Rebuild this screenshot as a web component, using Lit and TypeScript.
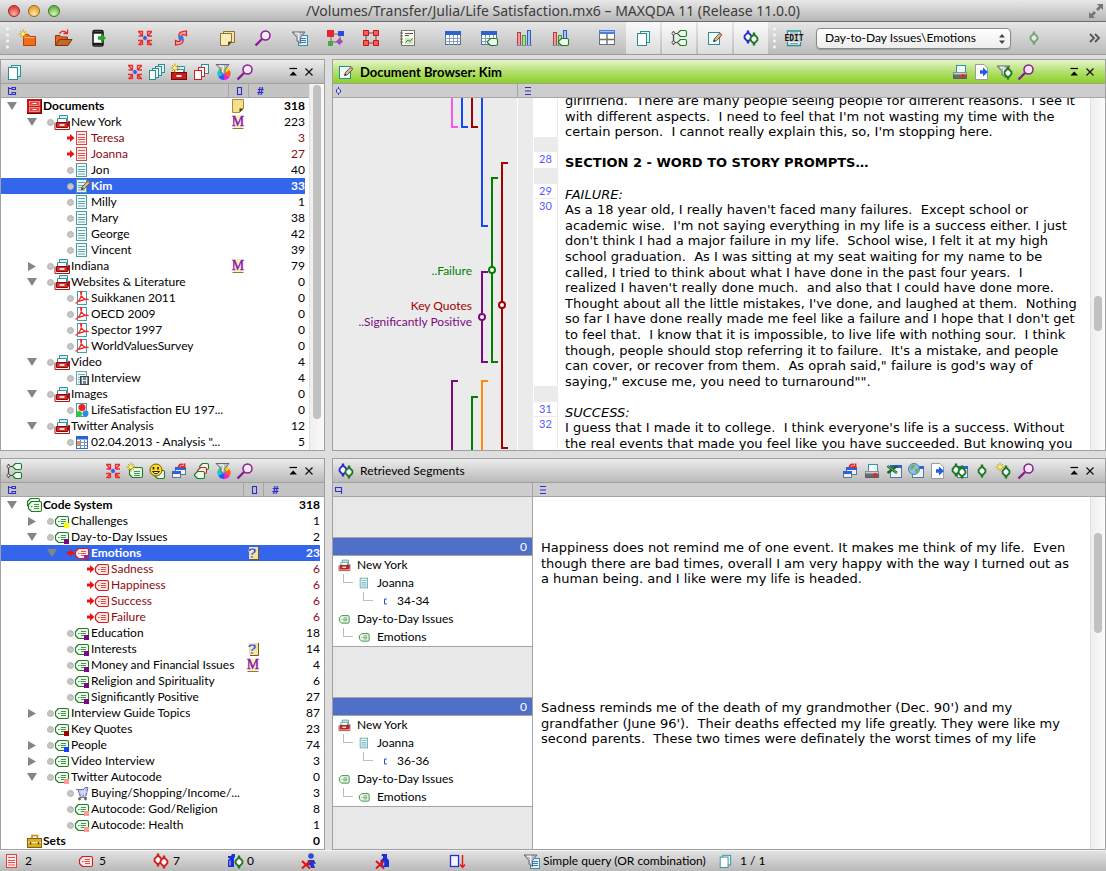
import { LitElement, html, svg, css, nothing } from "lit";
import { customElement, property, state } from "lit/decorators.js";
import { classMap } from "lit/directives/class-map.js";

/* ---------- shared icon parts ---------- */

const spark = (x: number, y: number) => svg`
  <path transform="translate(${x} ${y})" d="M0 -4.5V4.5M-4.5 0H4.5M-3 -3L3 3M3 -3L-3 3" stroke="#d0a000" stroke-width="1"/>
  <circle cx=${x} cy=${y} r="1.8" fill="#fff27a"/>`;

const diamond = (x: number, y: number, c: string) => svg`
  <path d="M${x} ${y - 6.5}V${y + 6.5}" stroke=${c} stroke-width="2.4"/>
  <path d="M${x - 1.2} ${y - 3.6}H${x + 1.2}L${x + 3.4} ${y - 1.2}V${y + 1.2}L${x + 1.2} ${y + 3.6}H${x - 1.2}L${x - 3.4} ${y + 1.2}V${y - 1.2}Z" fill="#fff" stroke=${c} stroke-width="1.9"/>`;

const sheet = (x: number, y: number, w: number, h: number, c: string, f = "#fff") => svg`
  <rect x=${x + 0.5} y=${y + 0.5} width=${w - 1} height=${h - 1} fill=${f} stroke=${c}/>`;

const tag = (x: number, y: number, w: number, h: number, c: string, f = "#eefaee") => svg`
  <path transform="translate(${x} ${y})" d="M3.5 .5H${w - 2}Q${w - 0.5} .5 ${w - 0.5} 2V${h - 2}Q${w - 0.5} ${h - 0.5} ${w - 2} ${h - 0.5}H3.5L.5 ${h - 3.5}V3.5Z"
    fill=${f} stroke=${c} stroke-width="1.1" stroke-linejoin="round"/>`;

const codeTag = (c: string, fill: string, lines: string) => svg`
  ${tag(0, 3, 14, 11, c, fill)}
  <path d="M3 8.500H4.500M6 6.500H11M5.500 8.500H11M6 10.500H11" stroke=${lines} stroke-width=".9"/>`;

const funnel = svg`
  <path d="M1 2H14L9.5 7.5V13.5L6 11V7.5Z" fill="#b9bec6" stroke="#656b75"/>
  <path d="M4 3.2H8L7.4 10" stroke="#fff" fill="none"/>`;

const colorWheel = svg`
  <path d="M9 9.5V3A6.500 6.500 0 0 1 14.7 6.2Z" fill="#ffd800"/><path d="M9 9.5L14.7 6.200A6.500 6.500 0 0 1 14.700 12.800Z" fill="#ff5a1e"/>
  <path d="M9 9.500L14.700 12.800A6.500 6.500 0 0 1 9 16Z" fill="#f01fd0"/><path d="M9 9.500V16A6.500 6.500 0 0 1 3.300 12.800Z" fill="#2a55ff"/>
  <path d="M9 9.500L3.300 12.800A6.500 6.500 0 0 1 3.300 6.200Z" fill="#12c7d8"/><path d="M9 9.500L3.300 6.200A6.500 6.500 0 0 1 9 3Z" fill="#3fd52c"/>`;

const funnelTop = svg`
  <path d="M1 .500H14L10 5.500V11L6 9V5.500Z" fill="#b9bec6" stroke="#656b75"/><path d="M4 2H8.500L7.500 8" stroke="#fff" fill="none"/>`;

const windowShape = (x: number, y: number, w: number, h: number) => svg`
  <rect x=${x + 0.5} y=${y + 0.5} width=${w - 1} height=${h - 1} fill="#eef3fb" stroke="#5b7796"/>
  <rect x=${x} y=${y} width=${w} height="3" fill="#2e63d6"/>`;

const pencil = svg`
  <path d="M6.5 11.5L7.4 8.6L12.6 3.2L14.8 5.2L9.4 10.7Z" fill="#d9b98c" stroke="#5a4636" stroke-width=".9"/>
  <path d="M12 3.8L14.2 5.8L15.4 4.4L13.4 2.4Z" fill="#d26a55"/><path d="M6.3 11.8L7 9.8L8.4 11Z" fill="#222"/>`;

const gridLines = (x: number, y: number, w: number, h: number) => svg`
  <rect x=${x + 0.5} y=${y + 0.5} width=${w - 1} height=${h - 1} fill="#fff" stroke="#4f6f9d"/>
  <rect x=${x} y=${y} width=${w} height="4" fill="#2c63cf"/>
  <path d="M${x + 4.5} ${y + 4}v${h - 4}M${x + 8.5} ${y + 4}v${h - 4}M${x + 12.5} ${y + 4}v${h - 4}M${x} ${y + 7.5}h${w}M${x} ${y + 10.5}h${w}" stroke="#7c93b4" stroke-width=".9"/>`;

const bars = svg`
  <rect x=".5" y="2.5" width="3" height="13" fill="#f09a9a" stroke="#b83c44"/>
  <rect x="5.500" y="5.500" width="3" height="10" fill="#a9e28b" stroke="#4b9a3a"/>
  <rect x="10.500" y=".500" width="3" height="15" fill="#a4c3f7" stroke="#2c5ec4"/>
  <path d="M-.500 15.500H15" stroke="#7f93a8"/>`;

const drawer = svg`
  <path d="M4.500 1.500H12.500V7.500H4.500Z" fill="#d8f0f1" stroke="#3a9298"/>
  <path d="M2.500 4.500H11.500V9.500H2.500Z" fill="#fff" stroke="#3a9298"/>
  <path d="M14.500 7V15.500H0V8.500" stroke="#b11414" fill="none"/>
  <path d="M1.500 8.500H12.500V13.500H1.500Z" fill="#d42a2a" stroke="#8b0a0a"/>
  <path d="M12.500 8.500L14 6.500V12L12.500 13.500Z" fill="#9c1010"/>
  <path d="M4.500 11H9.500" stroke="#fff" stroke-width="1.600"/>`;

const lined = (c: string, f: string, x = 3) => svg`
  <rect x=${x - 0.5} y="1.5" width="10" height="13" fill=${f} stroke=${c}/>
  <path d="M${x + 1} 4.500h7M${x + 1} 7.500h7M${x + 1} 9.500h7M${x + 1} 12h7" stroke=${c} stroke-width=".9"/>`;

const redCross = svg`<path d="M1 8L9 15.5M9 8L1 15.5" stroke="#e81111" stroke-width="2"/>`;
const bottle = svg`<path d="M7 1H12V5L14 7.5V14H5.500V7.500L8 5V3H6.500Z" fill="#1c2fd2"/><path d="M8.500 8V12.500" stroke="#aab4ff" stroke-width="1.500"/>`;

const folderBody = svg`<path d="M4.500 6V15.500H16.500V6.500H11L9.500 4.500H5.500Z" fill="#f36c17" stroke="#b2420a"/><path d="M5.500 7.500H15.500" stroke="#ffb27c"/>`;

const arrowRight = (x: number, y: number, c: string) =>
  svg`<path transform="translate(${x} ${y})" d="M0 -1.800H3V-4.500L8 0L3 4.500V1.800H0Z" fill=${c}/>`;

const ICONS: Record<string, unknown> = {
  folderNew: svg`${folderBody}${spark(4, 4)}`,
  folderOpen: svg`<path d="M.500 15.500V5.500H5L6.500 7H12.500V9.500" fill="#e0661c" stroke="#8b3a0a"/><path d="M.500 15.500L4.500 9.500H17L13 15.500Z" fill="#c4672f" stroke="#7d3408"/><path d="M4.500 3.500Q8 -1 11.500 3M8.500 3.500H12.500V-.500" stroke="#e22" fill="none" stroke-width="1.300"/>`,
  phone: svg`<rect x="2" y=".500" width="10" height="15.500" rx="1.500" fill="#fff" stroke="#1c1c1c" stroke-width="1.600"/><path d="M2 2.500H12M2 14H12" stroke="#1c1c1c" stroke-width="2.400"/>${arrowRight(7, 8, "#1fa821")}`,
  reset: svg`<path d="M1 1.500H5.500V6H1.500M1.500 1.500L5.500 6M10.500 6V1.500H15M10.500 6H15M15 1.500L10.500 6M1 10.500H5.500V15M1.500 15L5.500 10.500M1.500 14.500H5M10.500 15V10.500H15M15 15L10.500 10.500M11 14.500H14.500" stroke="#ee2b2b" stroke-width="1.300" fill="none"/><path d="M8 5V11M5 8H11" stroke="#8fb0ff"/><circle cx="8" cy="8" r="1.900" fill="#2b5cf0"/>`,
  swirl: svg`<path d="M6 7Q5 2.500 9.500 1.500L13.500 1V5.500L11 4.500Q8.500 4.500 8.500 6.500M10 9Q11 13.500 6.500 14.500L2.500 15V10.500L5 11.500Q7.500 11.500 7.500 9.500" fill="#f7a0a0" stroke="#e02020" stroke-width="1.200"/><circle cx="8" cy="8" r="2.600" fill="#2b7cf0"/>`,
  memos: svg`<path d="M4.500 1.500H15.500V12.500H4.500Z" fill="#f4e6a2" stroke="#8b7432"/><path d="M1.500 3.500H12.500V12L9.500 15.500H1.500Z" fill="#f8edb8" stroke="#8b7432"/><path d="M9.500 15.500V12H12.500" fill="#5b4b1c" stroke="#5b4b1c"/>`,
  search: svg`<path d="M.500 15.500L7 9" stroke="#8a1c92" stroke-width="2.400"/><circle cx="10.500" cy="5.500" r="4.500" fill="#f6e9f8" stroke="#8a1c92" stroke-width="1.500"/><path d="M8.500 5Q9 3.500 10.500 3.500" stroke="#fff" fill="none"/>`,
  funnelDoc: svg`<rect x="7.500" y="5.500" width="9" height="10" fill="#dff2f9" stroke="#3f8f9a"/><path d="M10 8.500h5M10 10.500h5M10 12.500h5" stroke="#3c76c4"/>${funnel}`,
  nodes: svg`<path d="M4 4H13V12H4Z" stroke="#8d5a5a" fill="none"/><rect x="0" y="0" width="7" height="7" fill="#e8252a"/><rect x="11" y="1" width="6" height="5" fill="#2a49e0"/><rect x="1" y="11" width="5" height="5" fill="#4aa845"/><path d="M12.500 8L16 11.500L12.500 15L9 11.500Z" fill="#a04ab8"/>`,
  nodesRed: svg`<path d="M3 3H13V13H3Z" stroke="#555" fill="none"/><path d="M.500 .500h5v5h-5zM10.500 .500h5v5h-5zM.500 10.500h5v5h-5zM10.500 10.500h5v5h-5z" fill="#ff5a5a" stroke="#d01010"/>`,
  journal: svg`<rect x="2.500" y=".500" width="13" height="15" fill="#fafaf2" stroke="#77776a"/><path d="M1 3h3M1 6h3M1 9h3M1 12h3" stroke="#666"/><path d="M6 3.500h8M6 5.500h4" stroke="#555"/><rect x="6" y="8" width="8" height="6" fill="#cfe7c4"/><path d="M6.500 12.500L9 10L11 11.500L13.500 8.500" stroke="#2c8a2c" fill="none"/>`,
  table: svg`${gridLines(0, 1, 16, 14)}`,
  tableCode: svg`${gridLines(0, 1, 16, 14)}${tag(6, 8, 11, 8, "#1e7b27")}`,
  bars,
  barsCode: svg`${bars}${tag(5, 8, 11, 8, "#1e7b27")}`,
  layout: svg`<rect x=".500" y=".500" width="15" height="14" fill="#fff" stroke="#6b6f78"/><rect x="0" y="0" width="16" height="4" fill="#4d7fd8"/><path d="M1 1.500H15" stroke="#9fc0f5"/><path d="M8 4V15M1 9.500H15" stroke="#6b6f78" stroke-width="1.400"/>`,
  docs: svg`${sheet(5, 1, 10, 12, "#2c8d92", "#e3f6f6")}${sheet(2, 3, 10, 13, "#2c8d92")}`,
  codes: svg`<path d="M2.500 1V15M2 3.500H6M2 12.500H6" stroke="#444" stroke-width="1.200" fill="none"/><circle cx="2.500" cy="3.500" r="1.500" fill="#fff" stroke="#444"/><circle cx="2.500" cy="12.500" r="1.500" fill="#fff" stroke="#444"/>${tag(6, 0, 10, 7, "#1e7b27")}${tag(6, 9, 10, 7, "#1e7b27")}`,
  docEdit: svg`${sheet(1, 2, 12, 13, "#2c8d92", "#f2fbfb")}${pencil}`,
  codings: svg`${diamond(5, 7, "#2a2ec4")}${diamond(11, 9, "#1c7a22")}`,
  codingsRed: svg`${diamond(5, 7, "#d42020")}${diamond(11, 9, "#d42020")}`,
  edit: svg`<path d="M1.500 4V1H14.500V4M1.500 12V15.500H14.500V12" stroke="#2c8d92" stroke-width="1.300" fill="#e8f6f7"/><path d="M4 3h8M4 13.500h8" stroke="#6f9fa6"/><text x="8" y="11" font-size="8" font-weight="700" text-anchor="middle" font-family="DejaVu Sans Mono, monospace" fill="#111">EDIT</text>`,
  diamond: svg`${diamond(8, 8, "#1c7a22")}`,
  chevrons: svg`<path d="M2 4L6 8L2 12M7 4L11 8L7 12" stroke="#555" stroke-width="1.800" fill="none"/>`,
  docsFour: svg`${sheet(9, 0, 7, 9, "#2c8d92", "#e3f6f6")}${sheet(6, 2, 7, 10, "#2c8d92", "#e3f6f6")}${sheet(3, 4, 7, 10, "#2c8d92", "#e3f6f6")}${sheet(0, 6, 7, 10, "#2c8d92")}`,
  docsRed: svg`${sheet(8, 0, 8, 10, "#2c8d92", "#e3f6f6")}${sheet(5, 3, 7, 10, "#d42020", "#fff")}${sheet(1, 6, 8, 10, "#d42020")}`,
  cabinetNew: svg`<path d="M5 2.500H13.500V8" fill="#d8f0f1" stroke="#3a9298"/><path d="M3.500 9V5.500H12.500V9" fill="#fff" stroke="#3a9298"/><rect x=".500" y="8.500" width="15" height="7" fill="#c81e1e" stroke="#7d0606"/><path d="M5.500 12H10.500" stroke="#fff" stroke-width="1.800"/>${spark(4, 4)}`,
  funnelColor: svg`${colorWheel}${funnelTop}`,
  collapse: svg`<path d="M4.500 4.500H12" stroke="#000" stroke-width="1.200"/><path d="M4.500 11.500L8.200 7.500L12 11.500Z" fill="#000"/>`,
  close: svg`<path d="M4.500 4.500L11.500 11.500M11.500 4.500L4.500 11.500" stroke="#111" stroke-width="1.200"/>`,
  printer: svg`<rect x="4.500" y="1.500" width="9" height="8" fill="#e9fbfb" stroke="#3d9297"/>
    <path d="M1.500 8.500H14.500V14.500H1.500Z" fill="#6a6a6e" stroke="#5a5a5e"/><path d="M1.500 8.500H14.500V10.500H1.500Z" fill="#c9c9cc"/>
    <circle cx="11" cy="12" r="1.900" fill="#f01d1d"/>`,
  exportDoc: svg`<path d="M1.500 .500H10L13.500 4V15.500H1.500Z" fill="#fff" stroke="#9a9aa2"/>${arrowRight(6, 8, "#1f5fe0")}`,
  funnelDiamond: svg`${funnel}${diamond(12, 9, "#1c7a22")}`,
  codeNew: svg`${tag(2, 4, 14, 11, "#1e7b27", "#e8f7e6")}<path d="M7 8.500h6M7 10.500h6M7 12.500h6" stroke="#2f8a36" stroke-width=".900"/>${spark(4, 4)}`,
  smiley: svg`${tag(5, 7, 11, 9, "#1e7b27")}<circle cx="7" cy="7" r="6" fill="#ffd91c" stroke="#7a5b00"/><path d="M4.500 4V6.500M9 4V6.500" stroke="#222" stroke-width="1.600"/><path d="M3.500 8.500Q7 13 10.500 8.500Z" fill="#fff" stroke="#222"/>`,
  windows: svg`${windowShape(4, 4, 11, 8)}${windowShape(1, 8, 9, 7)}<path d="M7.500 4Q8.500 .500 12 1.500M9.500 4H13.500V.500" stroke="#e22" stroke-width="1.800" fill="none"/>`,
  codesRed: svg`${tag(6, 0, 10, 7, "#1e7b27")}${tag(4, 4, 10, 7, "#d42020", "#ffeaea")}${tag(1, 8, 11, 8, "#1e7b27")}`,
  excel: svg`${windowShape(4, 2, 12, 13)}<path d="M1.500 3L11 10M11 3L1.500 10" stroke="#17691d" stroke-width="2.600"/><path d="M2 3L11 10" stroke="#8fd08f" stroke-width=".800"/>`,
  globe: svg`${windowShape(4, 3, 12, 12)}<circle cx="6" cy="6" r="5.500" fill="#8fbdec" stroke="#5280b0"/><path d="M2 5Q4 1 7 2L6 5L3 7ZM7 6L10.500 5Q11 9 7.500 10.500Z" fill="#6fb04a"/>`,
  codingsWin: svg`${windowShape(5, 3, 11, 12)}${diamond(4, 7, "#1c7a22")}${diamond(10, 9, "#1c7a22")}`,
  diamondNew: svg`${diamond(10, 9, "#1c7a22")}${spark(4, 4)}`,

  cabinet: svg`<rect x="0" y="1" width="15" height="15" fill="#c81616"/><rect x="2.500" y="3.500" width="10" height="4" fill="#d94747" stroke="#ffb0b0" stroke-width=".700"/><rect x="2.500" y="9.500" width="10" height="4" fill="#d94747" stroke="#ffb0b0" stroke-width=".700"/><path d="M5.500 5.500h4M5.500 11.500h4" stroke="#fff" stroke-width="1.200"/><path d="M0 15.500H15M14.500 1V15" stroke="#650505"/>`,
  drawer,
  docRed: lined("#e04040", "#fdecec", 2),
  docTeal: lined("#4a9da2", "#f2fbfb", 2),
  docPen: svg`${lined("#4a9da2", "#e6f3f5", 2)}${pencil}`,
  pdf: svg`<rect x="2.500" y="1.500" width="9" height="13" fill="#fff" stroke="#4a9da2"/><path d="M.500 13.500Q6 10.500 6.500 3Q6.500 .500 5.500 2Q6 9.500 13.500 9.500Q11.500 8.500 3.500 11.500" stroke="#f23030" stroke-width="1.300" fill="none"/>`,
  video: svg`${lined("#6aa5aa", "#f2fbfb", 2)}<rect x="5.500" y="6.500" width="8" height="8" fill="#7a8790" stroke="#39434a"/><path d="M7.500 7V14M11.500 7V14M7.500 10.500H11.500" stroke="#e6eef2"/>`,
  image: svg`<rect x="1.500" y="1.500" width="10" height="13" fill="#f2fbfb" stroke="#4a9da2"/><circle cx="7" cy="5.500" r="3.500" fill="#ee2222"/><circle cx="4" cy="12" r="3" fill="#34c63a"/><circle cx="10.500" cy="11.500" r="3" fill="#2a8cf0"/>`,
  tableSmall: svg`<rect x="1.500" y="2.500" width="11" height="12" fill="#fff" stroke="#3c6dc8"/><rect x="1" y="2" width="12" height="3.500" fill="#2c63cf"/><path d="M5.500 6V14M9.500 6V14M2 8.500H12M2 11.500H12" stroke="#7c93b4"/><rect x="2" y="7" width="3" height="4" fill="#f3903a"/>`,
  codesGreen: svg`${tag(0, 1, 13, 11, "#1e7b27")}${tag(1, 4, 14, 11, "#1e7b27")}<path d="M4 9.500H5.500M7 7.500h5M7 9.500h5M7 11.500h5" stroke="#2f8a36" stroke-width=".900"/>`,
  codeGreen: codeTag("#1e7b27", "#f1faf0", "#2f8a36"),
  codeRed: codeTag("#cf1f1f", "#fde6e6", "#e04040"),
  cart: svg`<path d="M1 4.500H3L5 11H11L13 2.500H10L9 4.500H3" fill="#b5baf0" stroke="#6f74ae"/><path d="M4.500 7h7.500M7 5v6M9.500 4v7" stroke="#eceefd" stroke-width=".800"/><path d="M4 12.500H12" stroke="#777"/><circle cx="4.500" cy="14" r="1.400" fill="#666"/><circle cx="10.500" cy="14" r="1.400" fill="#666"/>`,
  briefcase: svg`<path d="M5 5V2.500H10.500V5" stroke="#d8791a" stroke-width="1.600" fill="none"/><rect x=".500" y="5.500" width="14" height="9" fill="#d9b02e" stroke="#7f6412"/><path d="M1 9.500H14" stroke="#fff0a8"/><path d="M3.500 9v2.500M11.500 9v2.500" stroke="#5d4808" stroke-width="1.500"/>`,
  memo: svg`<path d="M2.500 1.500H13.500V10.500L9.500 14.500H2.500Z" fill="#f6e08c" stroke="#a98a3c"/><path d="M9.500 14.500V10.500H13.500Z" fill="#4d3e12"/>`,
  memoM: svg`<rect x="4" y="1" width="8" height="13" fill="#fbf1bd"/><path d="M2.500 14.500H13.500" stroke="#8f7a30"/><text x="8" y="12" font-size="14" text-anchor="middle" font-family="Liberation Serif, serif" fill="#8a17ad" stroke="#8a17ad" stroke-width=".4">M</text>`,
  memoQ: svg`<rect x="4" y="2" width="9" height="12" fill="#f6e39c"/><path d="M13.500 2V14.500H5" stroke="#6d5a20" fill="none"/><text x="7" y="13" font-size="15" font-weight="700" text-anchor="middle" font-family="Liberation Sans, sans-serif" fill="#2a3fd6" stroke="#fff" stroke-width=".3">?</text>`,
  bottleDiamond: svg`<path d="M1 3H4L5 1H8V4L7 5V14H1V7L3 5H1Z" fill="#1c2fd2"/><path d="M3 7.500V12.500" stroke="#aab4ff" stroke-width="1.200"/>${diamond(12, 9, "#1c7a22")}`,
  personX: svg`<circle cx="10" cy="3" r="2.800" fill="#2d49d8"/><path d="M7 7H13L15 11L12.500 10.500L14 15H10L9 12L6 13Z" fill="#2036c8"/>${redCross}`,
  bottleX: svg`${bottle}${redCross}`,
  boxArrow: svg`<rect x="1.500" y="2.500" width="8" height="11" fill="#f5f7ff" stroke="#2430d0" stroke-width="1.300"/><path d="M13.500 2V14M11 11.500L13.500 14.500L16 11.500" stroke="#e81515" stroke-width="1.400" fill="none"/>`,

  colTree: svg`<path d="M4.500 4V11.500M4.500 5.500H8M4.500 11.500H8M8 4.500H11.500V6.500H8ZM8 9.500H11.500V11.500H8Z" stroke="#2f2fd0" stroke-width="1.100" fill="none"/>`,
  colBox: svg`<rect x="5.500" y="4.500" width="4" height="7" stroke="#2f2fd0" stroke-width="1.100" fill="none"/>`,
  colLines: svg`<path d="M5 4.500H11M5 8H11M5 11.500H11" stroke="#2f2fd0" stroke-width="1.200"/>`,
  colDiamond: svg`<path d="M8.500 4V12" stroke="#2f2fd0"/><path d="M8 5.500H9L10.500 7V9L9 10.500H8L6.500 9V7Z" fill="#dcdcdc" stroke="#2f2fd0"/>`,
  colFlag: svg`<path d="M5.500 9.500V5.500H11.500V12M5.500 9.500H11.500" stroke="#2f2fd0" stroke-width="1.100" fill="none"/>`,
};

const icon = (name: string, size = 16) => html`<svg
  class="icon"
  width=${size}
  height=${size}
  viewBox="0 0 16 16"
  fill="none"
  aria-hidden="true"
>${ICONS[name]}</svg>`;

/* ---------- data ---------- */

interface Row {
  level: number;
  label: string;
  count: number;
  icon: string;
  twisty?: "open" | "closed";
  memo?: string;
  swatch?: string;
  active?: boolean;
  selected?: boolean;
  bold?: boolean;
}

const doc = (label: string, count: number, extra: Partial<Row> = {}): Row => ({ level: 2, label, count, icon: "docTeal", ...extra });
const group = (label: string, count: number, twisty: "open" | "closed", memo?: string): Row => ({ level: 1, label, count, icon: "drawer", twisty, memo });

const DOCUMENTS: Row[] = [
  { level: 0, label: "Documents", count: 318, icon: "cabinet", twisty: "open", memo: "memo", bold: true },
  group("New York", 223, "open", "memoM"),
  doc("Teresa", 3, { icon: "docRed", active: true }),
  doc("Joanna", 27, { icon: "docRed", active: true }),
  doc("Jon", 40),
  doc("Kim", 33, { icon: "docPen", selected: true, bold: true }),
  doc("Milly", 1),
  doc("Mary", 38),
  doc("George", 42),
  doc("Vincent", 39),
  group("Indiana", 79, "closed", "memoM"),
  group("Websites & Literature", 0, "open"),
  doc("Suikkanen 2011", 0, { icon: "pdf" }),
  doc("OECD 2009", 0, { icon: "pdf" }),
  doc("Spector 1997", 0, { icon: "pdf" }),
  doc("WorldValuesSurvey", 0, { icon: "pdf" }),
  group("Video", 4, "open"),
  doc("Interview", 4, { icon: "video" }),
  group("Images", 0, "open"),
  doc("LifeSatisfaction EU 197...", 0, { icon: "image" }),
  group("Twitter Analysis", 12, "open"),
  doc('02.04.2013 - Analysis "...', 5, { icon: "tableSmall" }),
];

const PURPLE = "#7b0a80";
const PINK = "#ff9a9a";
const code = (level: number, label: string, count: number, extra: Partial<Row> = {}): Row => ({ level, label, count, icon: "codeGreen", ...extra });
const hit = (label: string): Row => ({ level: 3, label, count: 6, icon: "codeRed", active: true });

const CODES: Row[] = [
  { level: 0, label: "Code System", count: 318, icon: "codesGreen", twisty: "open", bold: true },
  code(1, "Challenges", 1, { twisty: "closed", swatch: "#ffff00" }),
  code(1, "Day-to-Day Issues", 2, { twisty: "open", swatch: PURPLE }),
  code(2, "Emotions", 23, { icon: "codeRed", twisty: "open", swatch: "#8a2f8c", memo: "memoQ", active: true, selected: true }),
  hit("Sadness"),
  hit("Happiness"),
  hit("Success"),
  hit("Failure"),
  code(2, "Education", 18, { swatch: PURPLE }),
  code(2, "Interests", 14, { swatch: PURPLE, memo: "memoQ" }),
  code(2, "Money and Financial Issues", 4, { swatch: PURPLE, memo: "memoM" }),
  code(2, "Religion and Spirituality", 6, { swatch: PURPLE }),
  code(2, "Significantly Positive", 27, { swatch: PURPLE }),
  code(1, "Interview Guide Topics", 87, { twisty: "closed" }),
  code(1, "Key Quotes", 23, { swatch: "#a00000" }),
  code(1, "People", 74, { twisty: "closed", swatch: "#1440ff" }),
  code(1, "Video Interview", 3, { twisty: "closed" }),
  code(1, "Twitter Autocode", 0, { twisty: "open", swatch: PINK }),
  code(2, "Buying/Shopping/Income/...", 3, { icon: "cart" }),
  code(2, "Autocode: God/Religion", 8, { swatch: PINK }),
  code(2, "Autocode: Health", 1, { swatch: PINK }),
  { level: 0, label: "Sets", count: 0, icon: "briefcase", bold: true },
];

interface Para {
  no?: number;
  kind?: "heading" | "prompt";
  text: string;
}

const PARAGRAPHS: Para[] = [
  {
    text: `girlfriend.  There are many people seeing people for different reasons.  I see it
with different aspects.  I need to feel that I'm not wasting my time with the
certain person.  I cannot really explain this, so, I'm stopping here.`,
  },
  { text: "" },
  { no: 28, kind: "heading", text: "SECTION 2 - WORD TO STORY PROMPTS…" },
  { text: "" },
  { no: 29, kind: "prompt", text: "FAILURE:" },
  {
    no: 30,
    text: `As a 18 year old, I really haven't faced many failures.  Except school or
academic wise.  I'm not saying everything in my life is a success either. I just
don't think I had a major failure in my life.  School wise, I felt it at my high
school graduation.  As I was sitting at my seat waiting for my name to be
called, I tried to think about what I have done in the past four years.  I
realized I haven't really done much.  and also that I could have done more.
Thought about all the little mistakes, I've done, and laughed at them.  Nothing
so far I have done really made me feel like a failure and I hope that I don't get
to feel that.  I know that it is impossible, to live life with nothing sour.  I think
though, people should stop referring it to failure.  It's a mistake, and people
can cover, or recover from them.  As oprah said," failure is god's way of
saying," excuse me, you need to turnaround"".`,
  },
  { text: "" },
  { no: 31, kind: "prompt", text: "SUCCESS:" },
  {
    no: 32,
    text: `I guess that I made it to college.  I think everyone's life is a success. Without
the real events that made you feel like you have succeeded. But knowing you`,
  },
];

const SEGMENTS = [
  {
    range: "34-34",
    text: `Happiness does not remind me of one event. It makes me think of my life.  Even
though there are bad times, overall I am very happy with the way I turned out as
a human being. and I like were my life is headed.`,
  },
  {
    range: "36-36",
    text: `Sadness reminds me of the death of my grandmother (Dec. 90') and my
grandfather (June 96').  Their deaths effected my life greatly. They were like my
second parents.  These two times were definately the worst times of my life`,
  },
];

/* Coding stripes: column, start, end, colour and, where labelled, the height of the handle. */
const STRIPES = [
  { x: 119, y1: -4, y2: 29, c: "#ff55f0" },
  { x: 129, y1: -4, y2: 29, c: "#1448ff" },
  { x: 139, y1: -4, y2: 29, c: "#a00000" },
  { x: 149, y1: -4, y2: 128, c: "#1448ff" },
  { x: 169, y1: 65, y2: 350, c: "#a00000", knob: 207 },
  { x: 159, y1: 80, y2: 264, c: "#008000", knob: 172 },
  { x: 149, y1: 174, y2: 264, c: "#7b0a80", knob: 219 },
  { x: 119, y1: 283, y2: 1200, c: "#7b0a80" },
  { x: 139, y1: 299, y2: 1200, c: "#008000" },
  { x: 149, y1: 283, y2: 1200, c: "#ff8a10" },
];

const TOOL_GROUPS: [string, string][][] = [
  [["folderNew", "New project"], ["folderOpen", "Open project"], ["phone", "Import from mobile"]],
  [["reset", "Reset activations"], ["swirl", "Reset filters"]],
  [["memos", "Memos"], ["search", "Search"], ["funnelDoc", "Filter documents"], ["nodes", "MAXMaps"], ["nodesRed", "Relations"], ["journal", "Logbook"]],
  [["table", "Document variables"], ["tableCode", "Code variables"], ["bars", "Document statistics"], ["barsCode", "Code statistics"]],
  [["layout", "Layout"], ["docs", "Document System"], ["codes", "Code System"], ["docEdit", "Document Browser"], ["codings", "Retrieved Segments"]],
];
const PRESSED = new Set(["docs", "codes", "docEdit", "codings"]);

const iconStyles = css`
  .icon { display: block; flex: none; overflow: visible; }
  button { margin: 0; padding: 0; border: 0; background: none; color: inherit; font: inherit; }
`;

/* ---------- tree ---------- */

@customElement("outline-tree")
export class OutlineTree extends LitElement {
  @property({ attribute: false }) rows: Row[] = [];
  @property() name = "";

  static styles = [
    iconStyles,
    css`
      :host { display: block; min-width: 0; overflow: hidden; background: #fff; }
      table { width: 100%; table-layout: fixed; border-collapse: separate; border-spacing: 0; }
      .col-memo { width: 20px; }
      .col-count { width: 57px; }
      .col-edge { width: 4px; }
      th { padding: 0; background: #c4c4c4; border-bottom: 1px solid #a5a5a5; font-weight: 400; text-align: left; }
      th + th { border-left: 1px solid #a5a5a5; }
      .cap { display: flex; align-items: center; height: 13px; padding-left: 3px; overflow: hidden; color: #2f2fd0; font-size: 12px; font-weight: 700; line-height: 13px; }
      .cap.hash { padding-left: 8px; }
      td { height: 16px; padding: 0; line-height: 16px; white-space: nowrap; }
      .name { display: flex; align-items: center; height: 16px; }
      .twisty { flex: none; width: 20px; height: 16px; }
      .twisty svg { display: block; }
      .mark { flex: none; width: 8px; }
      .glyph { position: relative; flex: none; width: 16px; height: 16px; }
      .swatch { position: absolute; right: 2px; bottom: 1px; width: 5px; height: 5px; }
      .level-0 { padding-left: 6px; }
      .level-1 { padding-left: 26px; }
      .level-2 { padding-left: 46px; }
      .level-3 { padding-left: 66px; }
      .count { text-align: right; }
      .memo .icon { margin: 0 auto; }
      .bold { font-weight: 700; }
      .active { color: #8b0a14; }
      .selected td { color: #fff; font-weight: 700; background: #3366eb; }
      .selected td.edge { background: none; }
    `,
  ];

  private mark(r: Row) {
    return r.active
      ? svg`<path d="M0 6.500H3V4L7.500 8L3 12V9.500H0Z" fill="#e81414"/>`
      : svg`<circle cx="3.500" cy="8.500" r="3" fill="#c6c6c6" stroke="#b2b2b2"/>`;
  }

  render() {
    return html`<table role="treegrid" aria-label=${this.name}>
      <colgroup><col /><col class="col-memo" /><col class="col-count" /><col class="col-edge" /></colgroup>
      <thead>
        <tr>
          <th aria-label="Name"><div class="cap">${icon("colTree")}</div></th>
          <th aria-label="Memo"><div class="cap">${icon("colBox")}</div></th>
          <th colspan="2"><div class="cap hash">#</div></th>
        </tr>
      </thead>
      <tbody>
        ${this.rows.map(
          (r) => html`<tr class=${classMap({ bold: !!r.bold, active: !!r.active, selected: !!r.selected })} aria-level=${r.level + 1}>
            <td>
              <div class="name level-${r.level}">
                ${r.twisty
                  ? html`<button class="twisty" aria-label=${`Toggle ${r.label}`}>
                      <svg width="11" height="16" viewBox="0 0 11 16">
                        ${r.twisty === "open" ? svg`<path d="M0 4H10L5 12Z" fill="#858585"/>` : svg`<path d="M1 4V13L9 8.500Z" fill="#858585"/>`}
                      </svg>
                    </button>`
                  : html`<span class="twisty"></span>`}
                ${r.level ? html`<svg class="mark" width="8" height="16" viewBox="0 0 8 16">${this.mark(r)}</svg>` : nothing}
                <span class="glyph">
                  ${icon(r.icon)}${r.swatch ? html`<i class="swatch" style="background:${r.swatch}"></i>` : nothing}
                </span>
                <span>${r.label}</span>
              </div>
            </td>
            <td class="memo">${r.memo ? icon(r.memo) : nothing}</td>
            <td class="count">${r.count}</td>
            <td class="edge"></td>
          </tr>`
        )}
      </tbody>
    </table>`;
  }
}

/* ---------- panel frame ---------- */

@customElement("dock-panel")
export class DockPanel extends LitElement {
  @property() icon = "";
  @property() heading = "";
  @property({ attribute: false }) tools: [string, string][] = [];
  @property({ type: Boolean, reflect: true }) current = false;

  static styles = [
    iconStyles,
    css`
      :host { display: flex; flex-direction: column; min-width: 0; min-height: 0; overflow: hidden; border: 1px solid #a0a0a0; box-sizing: border-box; background: #fff; }
      header { display: flex; align-items: center; flex: none; height: 23px; padding: 0 7px 0 5px; border-bottom: 1px solid #a0a0a0; background: linear-gradient(#ececec, #bababa); }
      :host([current]) header { background: linear-gradient(#e6f5cf, #b4e070 50%, #8cd126); }
      h2 { flex: 1; margin: 0 0 0 6px; font-size: 12px; font-weight: 400; line-height: 16px; white-space: nowrap; }
      :host([current]) h2 { font-size: 13px; font-weight: 700; }
      .tool { display: grid; place-items: center; width: 22px; height: 22px; }
      .tools { display: flex; margin-right: 29px; }
      .win { width: 16px; }
      .body { display: flex; flex: 1; min-height: 0; }
    `,
  ];

  render() {
    return html`<header>
        ${icon(this.icon)}
        <h2>${this.heading}</h2>
        <div class="tools">
          ${this.tools.map(([i, t]) => html`<button class="tool" aria-label=${t}>${icon(i)}</button>`)}
        </div>
        <button class="win" aria-label="Collapse">${icon("collapse")}</button>
        <button class="win" aria-label="Close">${icon("close")}</button>
      </header>
      <div class="body"><slot></slot></div>`;
  }
}

/* ---------- application ---------- */

@customElement("app-root")
export class AppRoot extends LitElement {
  @state() private activeCode = "Day-to-Day Issues\\Emotions";

  static styles = [
    iconStyles,
    css`
      :host {
        display: grid;
        grid-template-rows: 22px 33px minmax(0, 1fr) 21px;
        height: 100vh;
        box-sizing: border-box;
        overflow: hidden;
        background: #dedede;
        color: #000;
        font: 12px/16px Lato, "Noto Sans", sans-serif;
      }

      .titlebar { display: grid; grid-template-columns: 80px 1fr 80px; align-items: center; border-bottom: 1px solid #6b6b6b; box-sizing: border-box; background: linear-gradient(#e8e8e8, #b6b6b6); }
      .lights { display: flex; gap: 8px; padding-left: 8px; }
      .light { width: 12px; height: 12px; border-radius: 50%; box-sizing: border-box; border: 1px solid; }
      .red { background: radial-gradient(circle at 50% 80%, #ffb3ab, #e4473f 70%); border-color: #8f2b28; }
      .amber { background: radial-gradient(circle at 50% 80%, #ffe9a6, #eda53b 70%); border-color: #96661c; }
      .green { background: radial-gradient(circle at 50% 80%, #d6f5b5, #6db84d 70%); border-color: #3f7527; }
      h1 { margin: 0; font: 400 14px/20px "Noto Sans", "Open Sans", sans-serif; color: #3c3c3c; text-align: center; white-space: nowrap; }
      .full { justify-self: end; margin-right: 3px; }

      .toolbar { display: flex; align-items: center; border-bottom: 1px solid #9c9c9c; box-sizing: border-box; padding-left: 6px; background: linear-gradient(#e6e6e6, #bcbcbc); }
      .grip { flex: none; width: 3px; height: 24px; margin-right: 1px; background: radial-gradient(circle, #f4f4f4 1px, transparent 2px) 0 0 / 3px 6px; }
      .group { display: flex; gap: 2px; margin-right: 12px; height: 100%; }
      .group.views { margin-right: 5px; }
      .btn { display: grid; place-items: center; flex: none; width: 34px; height: 32px; }
      .pressed { background: linear-gradient(#fafafa, #dcdcdc); }
      .faded { opacity: 0.5; }
      .picker { position: relative; flex: none; margin: 0 6px 0 5px; }
      select { appearance: none; display: block; width: 195px; height: 21px; padding: 0 24px 0 8px; border: 1px solid #8a8a8a; border-radius: 4px; background: linear-gradient(#fff, #ededed); box-shadow: 0 1px 1px #9b9b9b; color: #000; font: 12px/16px Lato, "Noto Sans", sans-serif; }
      .picker svg { position: absolute; top: 5px; right: 5px; pointer-events: none; }
      .more { margin-left: auto; margin-right: 2px; }

      main { display: grid; grid-template-columns: 325fr 774fr; grid-template-rows: repeat(2, minmax(0, 1fr)); gap: 7px; padding-top: 4px; min-height: 0; }
      outline-tree { flex: 1; }
      .scroll { flex: none; width: 14px; border-left: 1px solid #e2e2e2; background: linear-gradient(90deg, #efefef, #fafafa); }
      .scroll-thumb { width: 8px; margin-left: 3px; border-radius: 4px; background: #c1c1c1; }
      .thumb-docs { height: 334px; margin-top: 1px; }
      .thumb-text { height: 35px; margin-top: 198px; }
      .thumb-segs { height: 100px; margin-top: 36px; }

      .split { display: grid; flex: 1; min-width: 0; min-height: 0; grid-template-rows: 14px minmax(0, 1fr); }
      .browser { grid-template-columns: 185px minmax(0, 1fr); }
      .retrieval { grid-template-columns: 200px minmax(0, 1fr); }
      .colhead { display: flex; align-items: center; box-sizing: border-box; height: 14px; padding-left: 2px; border-bottom: 1px solid #a5a5a5; background: #cdcdcd; overflow: hidden; }
      .colhead:first-child { padding-left: 0; border-right: 1px solid #a5a5a5; }
      .colhead:first-child .icon { margin-left: -3px; }

      .stripes { min-height: 0; overflow: hidden; background: #ebebeb; border-right: 1px solid #fff; }
      .stripes svg { display: block; width: 100%; height: 100%; }
      .stripes text { font: 12px Lato, "Noto Sans", sans-serif; text-anchor: end; }
      .viewer { display: flex; min-width: 0; min-height: 0; overflow: hidden; }
      .gutter { flex: none; width: 15px; background: #ebebeb; border-right: 1px solid #fff; }
      .text { flex: 1; min-width: 0; overflow: hidden; }
      .prose { font: 13px/1.2 Verdana, "DejaVu Sans", sans-serif; }
      .prose p, p.prose { white-space: pre; }
      .flow { margin-top: -8px; }
      .para { display: grid; grid-template-columns: 24px 1fr; }
      .para-no { border-right: 1px solid #ebebeb; color: #5a5aff; font: 11px/14px Lato, "Noto Sans", sans-serif; text-align: center; }
      .para-no:empty { background: #ebebeb; }
      .lead .para-no { background: #fff; }
      .ruled .para-no { box-shadow: inset 0 -1px #ebebeb; }
      .para p { min-height: 1.2em; margin: 3px 0 -3px 7px; }
      .heading { font-weight: 700; }
      .prompt { font-style: italic; }

      .seg-area { display: flex; grid-column: 1 / -1; min-height: 0; overflow: hidden; }
      .segments { display: grid; grid-template-columns: 200px minmax(0, 1fr); grid-auto-rows: max-content; flex: 1; min-width: 0; padding-top: 40px; background: linear-gradient(90deg, #e8e8e8 199px, #a5a5a5 199px 200px, #fff 200px); }
      .card { margin-bottom: 50px; margin-right: 1px; border: solid #a5a5a5; border-width: 1px 0; background: #fff; }
      .weight { display: block; height: 17px; padding-right: 5px; border-bottom: 1px solid #a5a5a5; background: #4f6fc9; color: #fff; line-height: 17px; text-align: right; }
      .path { margin: 0; padding: 0; list-style: none; }
      .path li { display: flex; align-items: center; gap: 6px; height: 18px; padding-left: 6px; }
      .path .deep-1 { padding-left: 10px; }
      .path .deep-2 { padding-left: 30px; }
      .elbow { flex: none; align-self: flex-start; box-sizing: border-box; width: 10px; height: 9px; border: solid #bdbdbd; border-width: 0 0 1px 1px; }
      .seg-text { margin: 3px 0 0 8px; }

      .status { display: flex; align-items: center; padding-left: 5px; border-top: 1px solid #f4f4f4; box-sizing: border-box; background: linear-gradient(#e2e2e2, #b9b9b9); }
      .status span { display: flex; align-items: center; gap: 4px; min-width: 74px; white-space: nowrap; }
      .status .query { min-width: 195px; }
      .status .page { gap: 8px; }
    `,
  ];

  private scrollbar(kind: string) {
    return html`<div class="scroll"><div class="scroll-thumb ${kind}"></div></div>`;
  }

  private browser() {
    return html`<div class="split browser">
      <div class="colhead">${icon("colDiamond")}</div>
      <div class="colhead">${icon("colLines")}</div>
      <div class="stripes">
        <svg>
          ${STRIPES.map(
            (s) => svg`<path d="M${s.x + 6} ${s.y1}H${s.x}V${s.y2}H${s.x + 6}" fill="none" stroke=${s.c} stroke-width="2"/>
            ${s.knob ? svg`<circle cx=${s.x} cy=${s.knob} r="3" fill="#fff" stroke=${s.c} stroke-width="2"/>` : nothing}`
          )}
          <text x="139" y="177" fill="#008000">..Failure</text>
          <text x="139" y="212" fill="#a00000">Key Quotes</text>
          <text x="139" y="228" fill="#7b0a80">..Significantly Positive</text>
        </svg>
      </div>
      <div class="viewer">
        <div class="gutter"></div>
        <article class="text prose">
          <div class="flow">
            ${PARAGRAPHS.map(
              (p, i) => html`<div class=${classMap({ para: true, lead: i === 0, ruled: p.kind === "prompt" })}>
                <span class="para-no">${p.no ?? nothing}</span><p class=${p.kind ?? ""}>${p.text}</p>
              </div>`
            )}
          </div>
        </article>
        ${this.scrollbar("thumb-text")}
      </div>
    </div>`;
  }

  private retrieval() {
    return html`<div class="split retrieval">
      <div class="colhead">${icon("colFlag")}</div>
      <div class="colhead">${icon("colLines")}</div>
      <div class="seg-area">
        <div class="segments">
          ${SEGMENTS.map(
            (s) => html`<section class="card">
                <span class="weight">0</span>
                <ul class="path">
                  <li>${icon("drawer", 12)}New York</li>
                  <li class="deep-1"><i class="elbow"></i>${icon("docTeal", 12)}Joanna</li>
                  <li class="deep-2"><i class="elbow"></i><svg class="icon" width="12" height="12" viewBox="0 0 12 12"><path d="M8 4H5.500V9H8" stroke="#2455c8" fill="none"/></svg>${s.range}</li>
                  <li>${icon("codeGreen", 12)}Day-to-Day Issues</li>
                  <li class="deep-1"><i class="elbow"></i>${icon("codeGreen", 12)}Emotions</li>
                </ul>
              </section>
              <p class="seg-text prose">${s.text}</p>`
          )}
        </div>
        ${this.scrollbar("thumb-segs")}
      </div>
    </div>`;
  }

  render() {
    return html`
      <div class="titlebar">
        <div class="lights">
          <button class="light red" aria-label="Close window"></button>
          <button class="light amber" aria-label="Minimize window"></button>
          <button class="light green" aria-label="Zoom window"></button>
        </div>
        <h1>/Volumes/Transfer/Julia/Life Satisfaction.mx6 – MAXQDA 11 (Release 11.0.0)</h1>
        <button class="full" aria-label="Full screen">
          <svg class="icon" width="14" height="14" viewBox="0 0 14 14"><path d="M8 0H14V6L12 4L9 7L7 5L10 2ZM6 14H0V8L2 10L5 7L7 9L4 12Z" fill="#777"/></svg>
        </button>
      </div>

      <nav class="toolbar" aria-label="Main toolbar">
        <i class="grip"></i>
        ${TOOL_GROUPS.map(
          (g, i) => html`<div class=${classMap({ group: true, views: i === TOOL_GROUPS.length - 1 })}>
            ${g.map(([n, t]) => html`<button class="btn ${PRESSED.has(n) ? "pressed" : ""}" aria-label=${t}>${icon(n)}</button>`)}
          </div>`
        )}
        <i class="grip"></i>
        <button class="btn" aria-label="Edit mode">${icon("edit")}</button>
        <label class="picker">
          <select aria-label="Active code" @change=${(e: Event) => (this.activeCode = (e.target as HTMLSelectElement).value)}>
            <option selected>${this.activeCode}</option>
          </select>
          <svg width="8" height="12" viewBox="0 0 8 12"><path d="M1 4.500L4 1L7 4.500ZM1 7.500L4 11L7 7.500Z" fill="#444"/></svg>
        </label>
        <button class="btn faded" aria-label="Code segment">${icon("diamond")}</button>
        <button class="more" aria-label="More tools">${icon("chevrons")}</button>
      </nav>

      <main>
        <dock-panel icon="docs" .tools=${[["reset", "Reset"], ["docsFour", "Activate all"], ["cabinetNew", "New group"], ["docsRed", "Activated only"], ["funnelColor", "Filter by color"], ["search", "Search"]]}>
          <outline-tree name="Documents" .rows=${DOCUMENTS}></outline-tree>
          ${this.scrollbar("thumb-docs")}
        </dock-panel>

        <dock-panel current icon="docEdit" heading="Document Browser: Kim" .tools=${[["printer", "Print"], ["exportDoc", "Export"], ["funnelDiamond", "Filter codings"], ["search", "Search"]]}>
          ${this.browser()}
        </dock-panel>

        <dock-panel icon="codes" .tools=${[["reset", "Reset"], ["codeNew", "New code"], ["smiley", "Emoticodes"], ["windows", "Open in window"], ["codesRed", "Activated only"], ["funnelColor", "Filter by color"], ["search", "Search"]]}>
          <outline-tree name="Codes" .rows=${CODES}></outline-tree>
        </dock-panel>

        <dock-panel icon="codings" heading="Retrieved Segments" .tools=${[["windows", "Open in window"], ["printer", "Print"], ["excel", "Open in Excel"], ["globe", "Open in browser"], ["exportDoc", "Export"], ["codingsWin", "Overview of codings"], ["diamond", "Code segment"], ["diamondNew", "Code with new code"], ["search", "Search"]]}>
          ${this.retrieval()}
        </dock-panel>
      </main>

      <footer class="status">
        <span>${icon("docRed")}2</span>
        <span>${icon("codeRed")}5</span>
        <span>${icon("codingsRed")}7</span>
        <span>${icon("bottleDiamond")}0</span>
        <span>${icon("personX")}</span>
        <span>${icon("bottleX")}</span>
        <span>${icon("boxArrow")}</span>
        <span class="query">${icon("funnelDoc")}Simple query (OR combination)</span>
        <span class="page">${icon("docs", 14)}1 / 1</span>
      </footer>
    `;
  }
}
